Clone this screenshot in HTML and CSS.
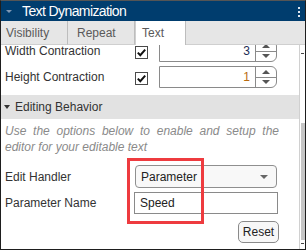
FILE: index.html
```html
<!DOCTYPE html>
<html>
<head>
<meta charset="utf-8">
<link rel="stylesheet" href="styles.css">
</head>
<body>
<div class="panel">
  <div class="titlebar">
    <span class="title-tri"></span>
    <span class="title">Text Dynamization</span>
    <span class="kebab"><i></i><i></i><i></i></span>
  </div>
  <div class="tabs">
    <div class="tab tab-vis">Visibility</div>
    <div class="tab tab-rep">Repeat</div>
    <div class="tab tab-text active">Text</div>
    <div class="tab-fill"></div>
  </div>
  <div class="body">
    <div class="scroll">
      <div class="content">
        <div class="row">
          <span class="label">Width Contraction</span>
          <span class="check"><svg width="13" height="13" viewBox="0 0 13 13"><path d="M2.8 6.6 L5.3 9.2 L10.2 3.6" fill="none" stroke="#111" stroke-width="2"/></svg></span>
          <div class="spinner">
            <span class="val val-3">3</span>
            <div class="spin"><span class="up"></span><span class="down"></span></div>
          </div>
        </div>
        <div class="row">
          <span class="label">Height Contraction</span>
          <span class="check"><svg width="13" height="13" viewBox="0 0 13 13"><path d="M2.8 6.6 L5.3 9.2 L10.2 3.6" fill="none" stroke="#111" stroke-width="2"/></svg></span>
          <div class="spinner">
            <span class="val val-1">1</span>
            <div class="spin"><span class="up"></span><span class="down"></span></div>
          </div>
        </div>
        <div class="section"><span class="sec-tri"></span>Editing Behavior</div>
        <p class="desc">Use the options below to enable and setup the editor for your editable text</p>
        <div class="frow frow-handler">
          <span class="label">Edit Handler</span>
          <div class="dropdown"><span>Parameter</span><span class="dd-arrow"></span></div>
        </div>
        <div class="frow frow-param">
          <span class="label">Parameter Name</span>
          <div class="textbox">Speed</div>
        </div>
        <div class="actions"><button class="btn">Reset</button></div>
      </div>
    </div>
    <div class="scrollbar"><span class="sb-up"></span><div class="thumb"></div><span class="sb-down"></span></div>
  </div>
  <div class="highlight"></div>
</div>
</body>
</html>
```

FILE: styles.css
```css
* { box-sizing: border-box; }
html, body { margin: 0; padding: 0; background: #fff; }
body {
  font-family: "Liberation Sans", Arial, sans-serif;
  font-size: 12px;
  color: #333;
}
.panel {
  position: relative;
  width: 306px;
  height: 250px;
  border: 1px solid #1e1e1e;
  border-top-color: #555;
  display: flex;
  flex-direction: column;
  overflow: hidden;
}
.titlebar {
  height: 20px;
  background: #003d6e;
  display: flex;
  align-items: center;
  flex-shrink: 0;
}
.title-tri {
  width: 0; height: 0;
  margin-left: 5px;
  border-left: 3px solid transparent;
  border-right: 3px solid transparent;
  border-top: 3px solid #7f97b3;
}
.title {
  margin-left: 10px;
  color: #fff;
  font-size: 14px;
  letter-spacing: -0.6px;
  line-height: 20px;
  flex: 1;
}
.kebab {
  display: flex;
  flex-direction: column;
  gap: 2px;
  margin-right: 5px;
  margin-top: 1px;
}
.kebab i {
  display: block;
  width: 2px; height: 2px;
  background: #dfe6ee;
}
.tabs {
  height: 24px;
  background: #e6e6e6;
  display: flex;
  flex-shrink: 0;
}
.tab {
  height: 24px;
  line-height: 24px;
  color: #5a5a5a;
  border-right: 1px solid #bdbdbd;
  border-bottom: 1px solid #cfcfcf;
}
.tab-vis { width: 67px; padding-left: 5px; }
.tab-rep { width: 67px; padding-left: 9px; }
.tab-text {
  width: 51px;
  padding-left: 6px;
  background: #fff;
  border-left: 1px solid #cfcfcf;
  border-right: 1px solid #bdbdbd;
  border-bottom: none;
}
.tab-fill {
  flex: 1;
  border-bottom: 1px solid #cfcfcf;
}
.body {
  flex: 1;
  display: flex;
  min-height: 0;
}
.scroll {
  flex: 1;
  overflow: hidden;
}
.content {
  margin-top: -5px;
}
.row {
  height: 22px;
  margin-bottom: 4px;
  display: flex;
  align-items: center;
  padding-left: 4px;
}
.label {
  width: 130px;
  flex-shrink: 0;
  color: #333;
}
.check {
  width: 13px; height: 13px;
  border: 1px solid #4a4a4a;
  background: #fff;
  display: flex;
  align-items: center;
  justify-content: center;
  margin-top: 2px;
}
.check svg { display: block; margin: -1px; }
.spinner {
  margin-left: 11px;
  width: 118px;
  height: 22px;
  display: flex;
  border: 1px solid #8a8a8a;
  border-radius: 0 6px 6px 0;
  background: #fff;
}
.val {
  flex: 1;
  text-align: right;
  padding-right: 5px;
  line-height: 20px;
  font-size: 12px;
}
.val-3 { color: #1c2c55; }
.val-1 { color: #b86a10; }
.spin {
  width: 21px;
  border-left: 1px solid #8a8a8a;
  display: flex;
  flex-direction: column;
}
.spin span {
  flex: 1;
  display: flex;
  align-items: center;
  justify-content: center;
}
.spin .up { border-bottom: 1px solid #8a8a8a; }
.spin .up::before {
  content: "";
  border-left: 4px solid transparent;
  border-right: 4px solid transparent;
  border-bottom: 4px solid #555;
}
.spin .down::before {
  content: "";
  border-left: 4px solid transparent;
  border-right: 4px solid transparent;
  border-top: 4px solid #555;
}
.section {
  margin-top: 7px;
  height: 24px;
  background: #e2e2e2;
  display: flex;
  align-items: center;
  font-size: 12px;
  color: #333;
}
.sec-tri {
  width: 0; height: 0;
  margin-left: 3px;
  margin-right: 5px;
  border-left: 3.5px solid transparent;
  border-right: 3.5px solid transparent;
  border-top: 4px solid #333;
}
.desc {
  margin: 0;
  padding: 4px 20px 0 4px;
  font-style: italic;
  color: #8a8a8a;
  line-height: 16px;
  text-align: justify;
}
.frow {
  display: flex;
  align-items: center;
  padding-left: 4px;
}
.frow .label { width: 129px; }
.frow-handler { margin-top: 10px; height: 23px; }
.frow-param { margin-top: 4px; height: 22px; }
.dropdown {
  margin-left: 1px;
  width: 142px;
  height: 23px;
  border: 1px solid #8f8f8f;
  border-radius: 4px;
  background: #f8f8f8;
  display: flex;
  align-items: center;
  justify-content: space-between;
  padding: 0 8px 0 5px;
  color: #222;
}
.dd-arrow {
  width: 0; height: 0;
  border-left: 4px solid transparent;
  border-right: 4px solid transparent;
  border-top: 4px solid #666;
}
.textbox {
  width: 144px;
  height: 22px;
  border: 1px solid #8a8a8a;
  background: #fff;
  line-height: 20px;
  padding-left: 5px;
  color: #222;
}
.actions {
  display: flex;
  justify-content: flex-end;
  padding-right: 20px;
  margin-top: 7px;
}
.btn {
  width: 41px;
  height: 22px;
  border: 1px solid #8a8a8a;
  border-radius: 5px;
  background: #f7f7f7;
  font-family: "Liberation Sans", Arial, sans-serif;
  font-size: 12px;
  color: #222;
  padding: 0;
}
.scrollbar {
  width: 6px;
  border-left: 1px solid #d0d0d0;
  background: #fff;
  display: flex;
  flex-direction: column;
  align-items: center;
  flex-shrink: 0;
}
.sb-up {
  margin-top: 8px;
  width: 3px; height: 1px;
  background: #444;
}
.thumb {
  margin-top: 69px;
  width: 4px;
  height: 117px;
  background: #c6c6c6;
}
.sb-down {
  margin-top: 3px;
  width: 3px; height: 1px;
  background: #444;
}
.highlight {
  position: absolute;
  left: 126px;
  top: 157px;
  width: 77px;
  height: 66px;
  border: 3px solid #ee3b3f;
  pointer-events: none;
}
```
